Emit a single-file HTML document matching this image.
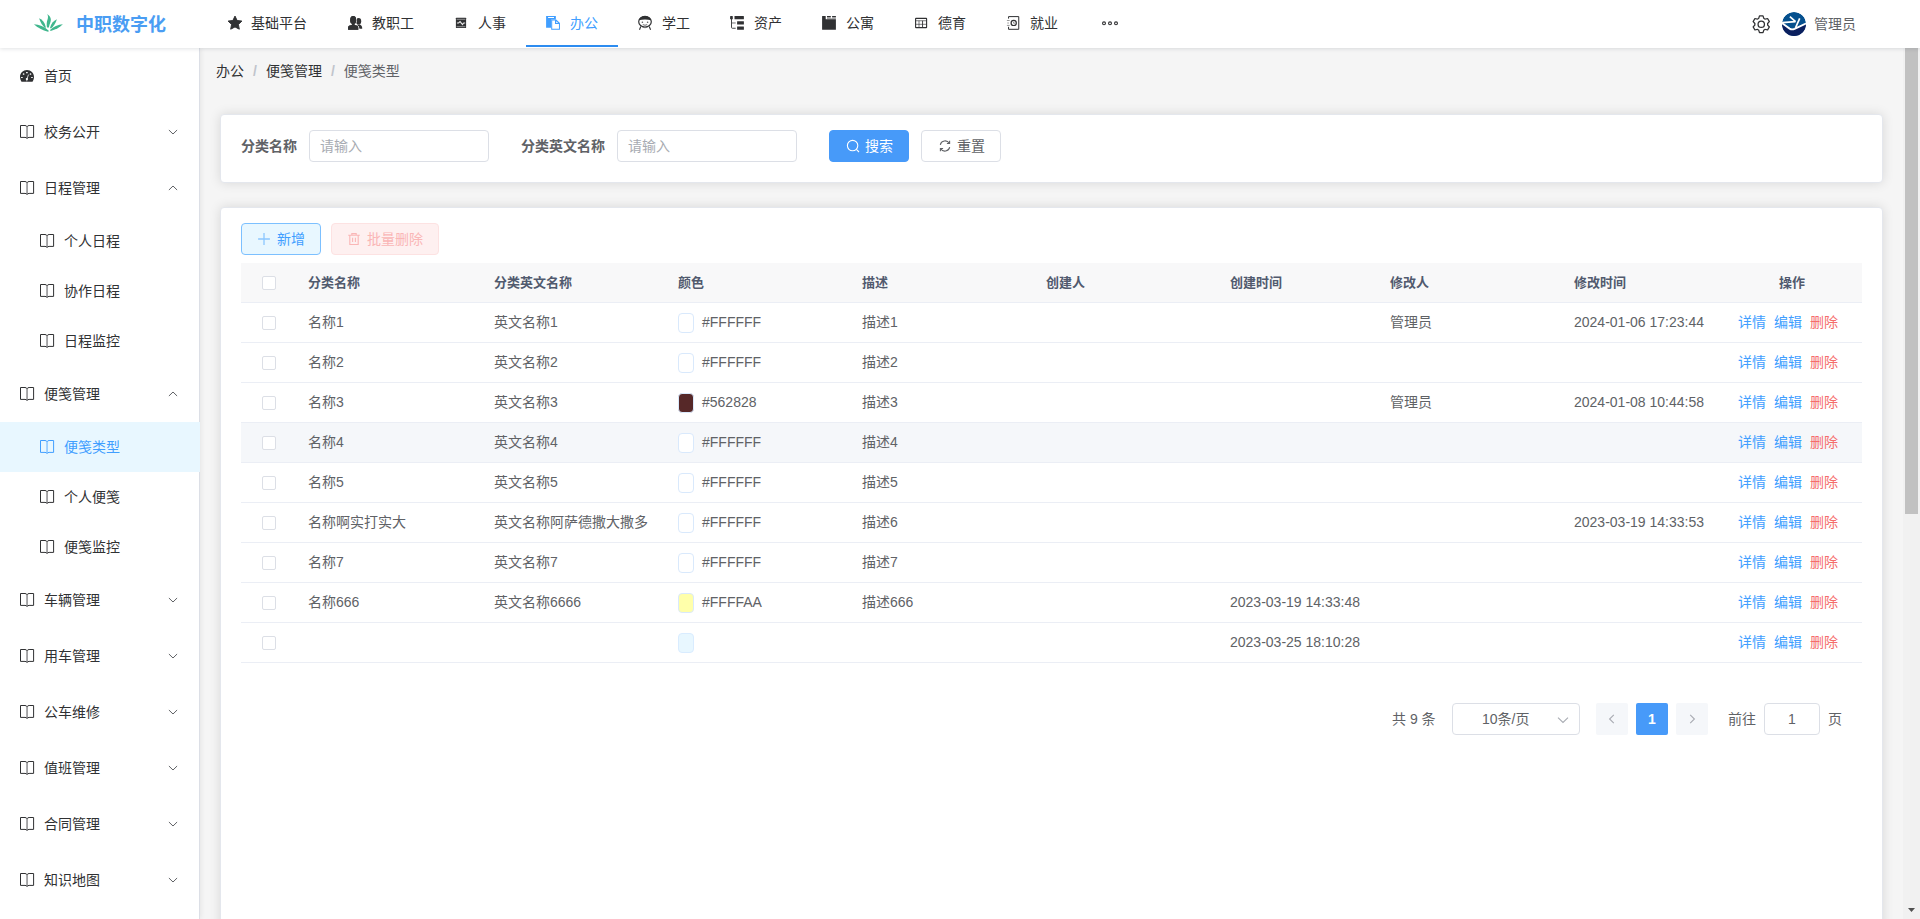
<!DOCTYPE html>
<html lang="zh-CN">
<head>
<meta charset="utf-8">
<title>便笺类型</title>
<style>
*{box-sizing:border-box;margin:0;padding:0}
html,body{width:1920px;height:919px;overflow:hidden}
body{font-family:"Liberation Sans","Noto Sans CJK SC",sans-serif;font-size:14px;color:#606266;background:#f5f5f5;position:relative}
svg{display:block}
/* header */
#hd{position:absolute;left:0;top:0;width:1920px;height:48px;background:#fff;box-shadow:0 1px 4px rgba(0,21,41,.12);z-index:10}
#logo{position:absolute;left:33px;top:13px}
#brand{position:absolute;left:76px;top:0;height:48px;line-height:50px;font-size:18px;font-weight:bold;color:#4a9df3;letter-spacing:0}
.nv{position:absolute;top:0;height:47px;line-height:46px;font-size:14px;color:#303133;white-space:nowrap}
.nv svg{position:absolute;left:20px;top:15px}
.nv span{position:absolute;left:44px;top:0}
.nv.on{color:#409eff;border-bottom:2px solid #2d8cf0}
#gear{position:absolute;left:1750.500px;top:13.600px}
#avatar{position:absolute;left:1782px;top:12px;width:24px;height:24px;border-radius:50%;overflow:hidden}
#uname{position:absolute;left:1814px;top:1px;line-height:47px;font-size:14px;color:#606266}
/* sidebar */
#sb{position:absolute;left:0;top:48px;width:200px;height:871px;background:#fff;border-right:1px solid #dcdfe6;box-shadow:1px 0 5px rgba(0,0,0,.07);z-index:5}
.mi{position:absolute;left:0;width:200px;height:56px;line-height:56px;color:#303133;font-size:14px}
.mi .ic{position:absolute;left:20px;top:21px}
.mi .tx{position:absolute;left:44px;top:0}
.mi .ar{position:absolute;left:167px;top:22px}
.si{position:absolute;left:0;width:200px;height:50px;line-height:50px;color:#303133;font-size:14px}
.si .ic{position:absolute;left:40px;top:18px}
.si .tx{position:absolute;left:64px;top:0}
.si.on{background:#e8f7ff;color:#409eff}
/* main */
#bc{position:absolute;left:216px;top:48px;height:46px;line-height:46px;font-size:14px;color:#303133;white-space:nowrap}
#bc i{font-style:normal;color:#c0c4cc;margin:0 9px;font-weight:bold}
#bc .last{color:#606266}
.card{position:absolute;background:#fff;border-radius:4px;border:1px solid #e4e7ed;box-shadow:0 0 12px rgba(0,0,0,.12)}
.lb{position:absolute;font-weight:bold;color:#606266;font-size:14px;line-height:32px;white-space:nowrap}
.ip{position:absolute;height:32px;border:1px solid #dcdfe6;border-radius:4px;background:#fff;line-height:30px;padding-left:10px;color:#a8abb2;font-size:14px}
.btn{position:absolute;height:32px;border-radius:4px;font-size:14px;line-height:30px;white-space:nowrap;border:1px solid #dcdfe6}
.btn svg{position:absolute;top:8px}
.btn span{position:absolute;top:0}
/* table */
#tb{position:absolute;left:241px;top:263px;width:1621px}
.tr{position:absolute;left:0;width:1621px;height:40px;border-bottom:1px solid #ebeef5;line-height:39px;font-size:14px;color:#606266}
.tr.h{background:#f8f8f9;color:#515a6e;font-weight:bold;font-size:13px}
.tr.hv{background:#f5f7fa}
.tr b,.tr s{position:absolute;top:0;font-weight:inherit;text-decoration:none;white-space:nowrap}
.ck{position:absolute;left:21px;top:13px;width:14px;height:14px;border:1px solid #dcdfe6;border-radius:2px;background:#fff}
.sw{position:absolute;left:437px;top:10px;width:16px;height:20px;border:1px solid #d9e9fc;border-radius:4px;background:#fff}
.op a{position:absolute;top:0;color:#409eff;font-size:14px}
.op a.d{color:#f56c6c}
/* pager */
#pg{position:absolute;left:0;top:0;font-size:13px;color:#606266}
#pg>*{position:absolute;white-space:nowrap}
/* scrollbar */
#sct{position:absolute;left:1903px;top:48px;width:17px;height:871px;background:#f1f1f1;z-index:6}
#sch{position:absolute;left:1905px;top:48px;width:13px;height:466px;background:#c1c1c1;z-index:7}
</style>
</head>
<body>
<div id="hd">
<svg id="logo" width="31" height="20" viewBox="0 0 31 20"><g fill="#40b68d"><path d="M14.1 1.200C16.800 2.400 18.600 5.400 17.600 8.600C16.900 10.900 16.200 12.600 15.900 14.600L14 14.500C13.400 11.500 13.800 8.400 14.600 6.200C15.200 4.400 15.200 2.600 14.100 1.200Z"/><path d="M6.100 5.300C9.400 6.600 11.800 9.600 12.900 14.400L11.900 14.900C9.600 12.800 7.400 9.600 6.100 5.300Z"/><path d="M23.900 6.300C20.400 7.800 18 10.800 17 15L18 15.400C20.600 13.400 22.800 10.400 23.900 6.300Z"/><path d="M0.900 11.300C6 11.400 11.400 13.600 16 18L15 18.800C9.600 17.200 4.600 14.800 0.900 11.300Z"/><path d="M29.900 11.300C25 11.600 20.400 13.600 17 17L17.600 17.900C22.400 16.800 26.600 14.600 29.900 11.300Z"/></g></svg>
<div id="brand">中职数字化</div>
<div class="nv" style="left:207px;width:121px"><svg width="16" height="16" viewBox="0 0 16 16"><path fill="#303133" d="M8 1.1l2.1 4.4 4.8.6-3.5 3.3.9 4.8L8 11.9l-4.3 2.3.9-4.8L1.1 6.1l4.8-.6z" stroke="#303133" stroke-width="1" stroke-linejoin="round"/></svg><span>基础平台</span></div>
<div class="nv" style="left:328px;width:106px"><svg width="16" height="16" viewBox="0 0 16 16"><g fill="#303133"><ellipse cx="10.600" cy="6.300" rx="2.600" ry="3.300"/><path d="M9.600 9.300c.7.300 1.500.3 2.200 0l1.100 1c.9.800 1.300 1.700 1.300 2.900v.6h-2.800c-.1-1.600-.7-2.700-2.200-3.400z"/><g stroke="#fff" stroke-width="1.500" paint-order="stroke"><ellipse cx="5.200" cy="5.200" rx="3" ry="4.100"/><path d="M3.900 8.400h2.600v1.500l2.100.7c1.100.4 1.700 1.100 1.700 2.300v1.900H.1v-1.900c0-1.200.6-1.900 1.700-2.300l2.100-.7z"/></g><path d="M3.900 8.400h2.600v1.500l2.100.7c1.100.4 1.700 1.100 1.700 2.300v1.900H.1v-1.900c0-1.200.6-1.900 1.700-2.300l2.100-.7z"/><ellipse cx="5.200" cy="5.200" rx="3" ry="4.100"/></g></svg><span>教职工</span></div>
<div class="nv" style="left:434px;width:92px"><svg width="16" height="16" viewBox="0 0 16 16"><rect x="1.900" y="2.800" width="10.200" height="10.200" rx=".5" fill="#303133"/><path d="M2.600 4.300h8.800M2.600 11.700h8.800" stroke="#fff" stroke-width=".8" opacity=".6" fill="none"/><path d="M2.900 8h1.700l1.500-1.400 2.400 3 1.200-1.600h1.500" fill="none" stroke="#fff" stroke-width="1.100" opacity=".9"/></svg><span>人事</span></div>
<div class="nv on" style="left:526px;width:92px"><svg width="16" height="16" viewBox="0 0 16 16"><path fill="#409eff" fill-rule="evenodd" d="M.1 1.100h9.750v3.500H5.200v8.200H.1zM2.100 2.100h5.900v1H2.100z"/><path fill="#409eff" fill-rule="evenodd" d="M5.200 4.600h5l3.750 3.500v6.700H5.200zM6.200 5.600v8.200h6.750V9H9V5.600zM10.200 6.200v1.800h1.900z"/></svg><span>办公</span></div>
<div class="nv" style="left:618px;width:92px"><svg width="16" height="16" viewBox="0 0 16 16"><ellipse cx="7" cy="6.700" rx="6.300" ry="5.300" fill="none" stroke="#303133" stroke-width="1.200"/><path fill="#303133" d="M.7 5.300C1.500 2.600 4 .9 7 .9s5.500 1.700 6.300 4.400C11.200 4.700 9.100 4.500 7 4.500S2.800 4.700.7 5.300z"/><circle cx="4.400" cy="7.300" r=".8" fill="#303133" opacity=".8"/><circle cx="9.600" cy="7.300" r=".8" fill="#303133" opacity=".8"/><path fill="none" stroke="#303133" stroke-width="1" opacity=".7" d="M4.800 9.600q2.200 1.300 4.400 0"/><path fill="none" stroke="#303133" stroke-width=".9" opacity=".55" d="M4.600 12.300q2.400.9 4.800 0"/><path fill="none" stroke="#303133" stroke-width="1.100" d="M2.800 11.500L1.500 14.800M11.200 11.500l1.400 3.300"/></svg><span>学工</span></div>
<div class="nv" style="left:710px;width:92px"><svg width="16" height="16" viewBox="0 0 16 16"><g fill="#303133"><rect x=".1" y=".9" width="2.700" height="3.400" rx=".6"/><rect x="4.500" y="1.100" width="9.400" height="3.200" rx=".3"/><rect x="7.100" y="6.200" width="6.800" height="3.400" rx=".3"/><rect x="7.100" y="11.400" width="6.800" height="3.400" rx=".3"/></g><path fill="none" stroke="#303133" stroke-width=".9" d="M1.500 4v8.400q0 .85.850.85H5.700"/><path fill="none" stroke="#303133" stroke-width="1.500" opacity=".45" d="M1.900 7.950h3.800"/></svg><span>资产</span></div>
<div class="nv" style="left:802px;width:92px"><svg width="16" height="16" viewBox="0 0 16 16"><path fill="#303133" d="M.1 1.200q0-.3.300-.3h3q.3 0 .3.300v3h10.200v10.300q0 .3-.3.300H.4q-.3 0-.3-.3z"/><path fill="#303133" d="M5 .9h3.800v1H5zM10.100.9h3.800v1h-3.800z"/><path fill="#303133" opacity=".45" d="M5 1.900h3.800v2.300H5zM10.100 1.900h3.800v2.300h-3.800zM8.800 3.300h1.300v.9H8.800z"/></svg><span>公寓</span></div>
<div class="nv" style="left:894px;width:92px"><svg width="16" height="16" viewBox="0 0 16 16"><rect x="1.600" y="3.400" width="11" height="9.200" rx=".4" fill="none" stroke="#303133" stroke-width="1.100"/><path fill="none" stroke="#303133" stroke-width=".9" opacity=".7" d="M1.600 5.750h11M1.600 9.300h11M5 5.750v6.850"/><path fill="none" stroke="#303133" stroke-width=".9" d="M8.550 5.750v6.850"/></svg><span>德育</span></div>
<div class="nv" style="left:986px;width:92px"><svg width="16" height="16" viewBox="0 0 16 16"><path fill="none" stroke="#303133" stroke-width="1" d="M2.550 3.600V1.600h10.200v12.700H2.550v-2.500"/><path fill="none" stroke="#303133" stroke-width=".9" opacity=".55" d="M.9 5.500h2.800M1.300 8h1.600M.9 10.400h2.800"/><circle cx="7.700" cy="7.900" r="2.600" fill="none" stroke="#303133" stroke-width="1.200"/><path fill="none" stroke="#303133" stroke-width=".9" opacity=".6" d="M7.600 6.700v1.500h1.300"/></svg><span>就业</span></div>
<div class="nv" style="left:1078px;width:60px"><svg style="left:22px" width="20" height="16" viewBox="0 0 20 16"><g fill="none" stroke="#303133" stroke-width="1.100"><circle cx="4" cy="8.300" r="1.450"/><circle cx="10" cy="8.300" r="1.450"/><circle cx="16" cy="8.300" r="1.450"/></g></svg></div>
<svg id="gear" width="20.500" height="20.500" viewBox="0 0 1024 1024"><path fill="#303133" d="M600.704 64a32 32 0 0 1 30.464 22.208l35.200 109.376c14.784 7.232 28.928 15.360 42.432 24.512l112.384-24.192a32 32 0 0 1 34.432 15.360L944.32 364.800a32 32 0 0 1-4.032 37.504l-77.120 85.120a357.120 357.120 0 0 1 0 49.024l77.120 85.248a32 32 0 0 1 4.032 37.504l-88.704 153.600a32 32 0 0 1-34.432 15.296L708.800 803.904c-13.440 9.088-27.648 17.280-42.368 24.512l-35.264 109.376A32 32 0 0 1 600.704 960H423.296a32 32 0 0 1-30.464-22.208L357.696 828.480a351.616 351.616 0 0 1-42.560-24.640l-112.320 24.256a32 32 0 0 1-34.432-15.360L79.680 659.200a32 32 0 0 1 4.032-37.504l77.120-85.248a357.120 357.120 0 0 1 0-48.896l-77.120-85.248A32 32 0 0 1 79.680 364.800l88.704-153.600a32 32 0 0 1 34.432-15.296l112.320 24.256c13.568-9.152 27.776-17.408 42.560-24.640l35.200-109.312A32 32 0 0 1 423.232 64H600.640zm-23.424 64H446.720l-36.352 113.088-24.512 11.968a294.113 294.113 0 0 0-34.816 20.096l-22.656 15.360-116.224-25.088-65.280 113.152 79.680 88.192-1.920 27.136a293.120 293.120 0 0 0 0 40.192l1.920 27.136-79.808 88.192 65.344 113.152 116.224-25.024 22.656 15.296a294.113 294.113 0 0 0 34.816 20.096l24.512 11.968L446.720 896h130.688l36.480-113.152 24.448-11.904a288.282 288.282 0 0 0 34.752-20.096l22.592-15.296 116.288 25.024 65.280-113.152-79.744-88.192 1.920-27.136a293.120 293.120 0 0 0 0-40.256l-1.920-27.136 79.808-88.128-65.344-113.152-116.288 24.960-22.592-15.232a287.616 287.616 0 0 0-34.752-20.096l-24.448-11.904L577.344 128zM512 320a192 192 0 1 1 0 384 192 192 0 0 1 0-384zm0 64a128 128 0 1 0 0 256 128 128 0 0 0 0-256z"/></svg>
<svg id="avatar" width="24" height="24" viewBox="0 0 24 24"><circle cx="12" cy="12" r="12" fill="#05508e"/><path d="M0 11.500L7.500 17Q9.800 18.400 12.800 17.200L24 12V24H0z" fill="#0a1f5e"/><g fill="none" stroke="#fff" stroke-width="1.700"><path d="M-.5 10.800L7.600 16.600Q9.800 18 12.600 16.900L24.500 11.300" stroke-width="1.900"/><path d="M.1 10.600L13.500 9.600"/><path d="M7.900 4.700L13.500 9.600"/><path d="M17.700 6.400L13.500 15.800"/></g></svg>
<div id="uname">管理员</div>
</div>

<div id="sb">
<div class="mi" style="top:0px"><svg class="ic" style="top:22px" width="15" height="12" viewBox="0 0 15 12"><path fill="#303133" d="M7 .1C3.100.1 0 3.200 0 7.100c0 1.500.5 2.900 1.200 4.100.2.300.5.600.9.600h9.800c.4 0 .7-.3.900-.6.700-1.200 1.200-2.600 1.200-4.100 0-3.900-3.100-7-7-7z"/><g fill="#fff"><rect x="6" y="1.900" width="1.800" height="1.300" rx=".5"/><rect x="1" y="6.900" width="1.800" height="1.200" rx=".5"/><rect x="11.050" y="6.900" width="1.800" height="1.200" rx=".5"/><circle cx="3.600" cy="4" r=".85"/><circle cx="10.500" cy="4" r=".85"/><circle cx="6.900" cy="9.050" r="1.150"/></g><path d="M6.900 9.050L8.500 4.600" stroke="#fff" stroke-width=".9" opacity=".85" fill="none"/><path d="M6.900 9.050L6.800 11.300" stroke="#fff" stroke-width=".9" opacity=".7" fill="none"/></svg><span class="tx">首页</span></div>
<div class="mi" style="top:56px"><svg class="ic" width="15" height="15" viewBox="0 0 15 15"><path fill="none" stroke="#303133" stroke-width="1" d="M.5.500h4.500c1.100 0 1.800.5 2.050 1.300C7.300 1 8 .5 9.100.5h4.500v11.900H9.100c-1.100 0-1.800.4-2.050 1.100-.25-.7-.95-1.100-2.050-1.100H.5z"/><path fill="none" stroke="#303133" stroke-width="1.400" opacity=".6" d="M7.050 1.900v11.400"/></svg><span class="tx">校务公开</span><svg class="ar" width="12" height="12" viewBox="0 0 12 12"><path fill="none" stroke="#606266" stroke-width="1" d="M1.900 4L6 8l4.100-4"/></svg></div>
<div class="mi" style="top:112px"><svg class="ic" width="15" height="15" viewBox="0 0 15 15"><path fill="none" stroke="#303133" stroke-width="1" d="M.5.500h4.500c1.100 0 1.800.5 2.050 1.300C7.300 1 8 .5 9.100.5h4.500v11.900H9.100c-1.100 0-1.800.4-2.050 1.100-.25-.7-.95-1.100-2.050-1.100H.5z"/><path fill="none" stroke="#303133" stroke-width="1.400" opacity=".6" d="M7.050 1.900v11.400"/></svg><span class="tx">日程管理</span><svg class="ar" width="12" height="12" viewBox="0 0 12 12"><path fill="none" stroke="#606266" stroke-width="1" d="M1.900 8L6 4l4.100 4"/></svg></div>
<div class="si" style="top:168px"><svg class="ic" width="15" height="15" viewBox="0 0 15 15"><path fill="none" stroke="#303133" stroke-width="1" d="M.5.500h4.500c1.100 0 1.800.5 2.050 1.300C7.300 1 8 .5 9.100.5h4.500v11.900H9.100c-1.100 0-1.800.4-2.050 1.100-.25-.7-.95-1.100-2.050-1.100H.5z"/><path fill="none" stroke="#303133" stroke-width="1.400" opacity=".6" d="M7.050 1.900v11.400"/></svg><span class="tx">个人日程</span></div>
<div class="si" style="top:218px"><svg class="ic" width="15" height="15" viewBox="0 0 15 15"><path fill="none" stroke="#303133" stroke-width="1" d="M.5.500h4.500c1.100 0 1.800.5 2.050 1.300C7.300 1 8 .5 9.100.5h4.500v11.900H9.100c-1.100 0-1.800.4-2.050 1.100-.25-.7-.95-1.100-2.050-1.100H.5z"/><path fill="none" stroke="#303133" stroke-width="1.400" opacity=".6" d="M7.050 1.900v11.400"/></svg><span class="tx">协作日程</span></div>
<div class="si" style="top:268px"><svg class="ic" width="15" height="15" viewBox="0 0 15 15"><path fill="none" stroke="#303133" stroke-width="1" d="M.5.500h4.500c1.100 0 1.800.5 2.050 1.300C7.300 1 8 .5 9.100.5h4.500v11.900H9.100c-1.100 0-1.800.4-2.050 1.100-.25-.7-.95-1.100-2.050-1.100H.5z"/><path fill="none" stroke="#303133" stroke-width="1.400" opacity=".6" d="M7.050 1.900v11.400"/></svg><span class="tx">日程监控</span></div>
<div class="mi" style="top:318px"><svg class="ic" width="15" height="15" viewBox="0 0 15 15"><path fill="none" stroke="#303133" stroke-width="1" d="M.5.500h4.500c1.100 0 1.800.5 2.050 1.300C7.300 1 8 .5 9.100.5h4.500v11.900H9.100c-1.100 0-1.800.4-2.050 1.100-.25-.7-.95-1.100-2.050-1.100H.5z"/><path fill="none" stroke="#303133" stroke-width="1.400" opacity=".6" d="M7.050 1.900v11.400"/></svg><span class="tx">便笺管理</span><svg class="ar" width="12" height="12" viewBox="0 0 12 12"><path fill="none" stroke="#606266" stroke-width="1" d="M1.900 8L6 4l4.100 4"/></svg></div>
<div class="si on" style="top:374px"><svg class="ic" width="15" height="15" viewBox="0 0 15 15"><path fill="none" stroke="#409eff" stroke-width="1" d="M.5.500h4.500c1.100 0 1.800.5 2.050 1.300C7.300 1 8 .5 9.100.5h4.500v11.900H9.100c-1.100 0-1.800.4-2.050 1.100-.25-.7-.95-1.100-2.050-1.100H.5z"/><path fill="none" stroke="#409eff" stroke-width="1.400" opacity=".6" d="M7.050 1.900v11.400"/></svg><span class="tx">便笺类型</span></div>
<div class="si" style="top:424px"><svg class="ic" width="15" height="15" viewBox="0 0 15 15"><path fill="none" stroke="#303133" stroke-width="1" d="M.5.500h4.500c1.100 0 1.800.5 2.050 1.300C7.300 1 8 .5 9.100.5h4.500v11.900H9.100c-1.100 0-1.800.4-2.050 1.100-.25-.7-.95-1.100-2.050-1.100H.5z"/><path fill="none" stroke="#303133" stroke-width="1.400" opacity=".6" d="M7.050 1.900v11.400"/></svg><span class="tx">个人便笺</span></div>
<div class="si" style="top:474px"><svg class="ic" width="15" height="15" viewBox="0 0 15 15"><path fill="none" stroke="#303133" stroke-width="1" d="M.5.500h4.500c1.100 0 1.800.5 2.050 1.300C7.300 1 8 .5 9.100.5h4.500v11.900H9.100c-1.100 0-1.800.4-2.050 1.100-.25-.7-.95-1.100-2.050-1.100H.5z"/><path fill="none" stroke="#303133" stroke-width="1.400" opacity=".6" d="M7.050 1.900v11.400"/></svg><span class="tx">便笺监控</span></div>
<div class="mi" style="top:524px"><svg class="ic" width="15" height="15" viewBox="0 0 15 15"><path fill="none" stroke="#303133" stroke-width="1" d="M.5.500h4.500c1.100 0 1.800.5 2.050 1.300C7.300 1 8 .5 9.100.5h4.500v11.900H9.100c-1.100 0-1.800.4-2.050 1.100-.25-.7-.95-1.100-2.050-1.100H.5z"/><path fill="none" stroke="#303133" stroke-width="1.400" opacity=".6" d="M7.050 1.900v11.400"/></svg><span class="tx">车辆管理</span><svg class="ar" width="12" height="12" viewBox="0 0 12 12"><path fill="none" stroke="#606266" stroke-width="1" d="M1.900 4L6 8l4.100-4"/></svg></div>
<div class="mi" style="top:580px"><svg class="ic" width="15" height="15" viewBox="0 0 15 15"><path fill="none" stroke="#303133" stroke-width="1" d="M.5.500h4.500c1.100 0 1.800.5 2.050 1.300C7.300 1 8 .5 9.100.5h4.500v11.900H9.100c-1.100 0-1.800.4-2.050 1.100-.25-.7-.95-1.100-2.050-1.100H.5z"/><path fill="none" stroke="#303133" stroke-width="1.400" opacity=".6" d="M7.050 1.900v11.400"/></svg><span class="tx">用车管理</span><svg class="ar" width="12" height="12" viewBox="0 0 12 12"><path fill="none" stroke="#606266" stroke-width="1" d="M1.900 4L6 8l4.100-4"/></svg></div>
<div class="mi" style="top:636px"><svg class="ic" width="15" height="15" viewBox="0 0 15 15"><path fill="none" stroke="#303133" stroke-width="1" d="M.5.500h4.500c1.100 0 1.800.5 2.050 1.300C7.300 1 8 .5 9.100.5h4.500v11.900H9.100c-1.100 0-1.800.4-2.050 1.100-.25-.7-.95-1.100-2.050-1.100H.5z"/><path fill="none" stroke="#303133" stroke-width="1.400" opacity=".6" d="M7.050 1.900v11.400"/></svg><span class="tx">公车维修</span><svg class="ar" width="12" height="12" viewBox="0 0 12 12"><path fill="none" stroke="#606266" stroke-width="1" d="M1.900 4L6 8l4.100-4"/></svg></div>
<div class="mi" style="top:692px"><svg class="ic" width="15" height="15" viewBox="0 0 15 15"><path fill="none" stroke="#303133" stroke-width="1" d="M.5.500h4.500c1.100 0 1.800.5 2.050 1.300C7.300 1 8 .5 9.100.5h4.500v11.900H9.100c-1.100 0-1.800.4-2.050 1.100-.25-.7-.95-1.100-2.050-1.100H.5z"/><path fill="none" stroke="#303133" stroke-width="1.400" opacity=".6" d="M7.050 1.900v11.400"/></svg><span class="tx">值班管理</span><svg class="ar" width="12" height="12" viewBox="0 0 12 12"><path fill="none" stroke="#606266" stroke-width="1" d="M1.900 4L6 8l4.100-4"/></svg></div>
<div class="mi" style="top:748px"><svg class="ic" width="15" height="15" viewBox="0 0 15 15"><path fill="none" stroke="#303133" stroke-width="1" d="M.5.500h4.500c1.100 0 1.800.5 2.050 1.300C7.300 1 8 .5 9.100.5h4.500v11.900H9.100c-1.100 0-1.800.4-2.050 1.100-.25-.7-.95-1.100-2.050-1.100H.5z"/><path fill="none" stroke="#303133" stroke-width="1.400" opacity=".6" d="M7.050 1.900v11.400"/></svg><span class="tx">合同管理</span><svg class="ar" width="12" height="12" viewBox="0 0 12 12"><path fill="none" stroke="#606266" stroke-width="1" d="M1.900 4L6 8l4.100-4"/></svg></div>
<div class="mi" style="top:804px"><svg class="ic" width="15" height="15" viewBox="0 0 15 15"><path fill="none" stroke="#303133" stroke-width="1" d="M.5.500h4.500c1.100 0 1.800.5 2.050 1.300C7.300 1 8 .5 9.100.5h4.500v11.900H9.100c-1.100 0-1.800.4-2.050 1.100-.25-.7-.95-1.100-2.050-1.100H.5z"/><path fill="none" stroke="#303133" stroke-width="1.400" opacity=".6" d="M7.050 1.900v11.400"/></svg><span class="tx">知识地图</span><svg class="ar" width="12" height="12" viewBox="0 0 12 12"><path fill="none" stroke="#606266" stroke-width="1" d="M1.900 4L6 8l4.100-4"/></svg></div>
</div>
<div id="bc">办公<i>/</i>便笺管理<i>/</i><span class="last">便笺类型</span></div>
<div class="card" style="left:220px;top:114px;width:1663px;height:69px"></div>
<div class="lb" style="left:241px;top:130px">分类名称</div>
<div class="ip" style="left:309px;top:130px;width:180px">请输入</div>
<div class="lb" style="left:521px;top:130px">分类英文名称</div>
<div class="ip" style="left:617px;top:130px;width:180px">请输入</div>
<div class="btn" style="left:829px;top:130px;width:80px;background:#479af9;border-color:#479af9;color:#fff"><svg style="left:16px" width="14" height="14" viewBox="0 0 14 14"><circle cx="6.600" cy="6.600" r="5.200" fill="none" stroke="#fff" stroke-width="1.100"/><path d="M10.400 10.400l2.600 2.600" stroke="#fff" stroke-width="1.100" fill="none"/></svg><span style="left:35px">搜索</span></div>
<div class="btn" style="left:921px;top:130px;width:80px;background:#fff;color:#606266"><svg style="left:16px" width="14" height="14" viewBox="0 0 14 14"><g fill="none" stroke="#606266" stroke-width="1.100"><path d="M2.300 5.800A4.900 4.900 0 0 1 11.300 4.300"/><path d="M11.700 8.200A4.900 4.900 0 0 1 2.700 9.700"/><path d="M11.600 1.800v2.700H8.900"/><path d="M2.400 12.200V9.500h2.700"/></g></svg><span style="left:35px">重置</span></div>
<div class="card" style="left:220px;top:207px;width:1663px;height:760px"></div>
<div class="btn" style="left:241px;top:223px;width:80px;background:#e8f7ff;border-color:#7cc0ff;color:#409eff"><svg style="left:15.200px" width="14" height="14" viewBox="0 0 14 14"><path d="M7 1.100v11.800M1.100 7h11.800" stroke="#409eff" stroke-width="1.300" opacity=".55" fill="none"/></svg><span style="left:35px">新增</span></div>
<div class="btn" style="left:331px;top:223px;width:108px;background:#fef0f0;border-color:#fde2e2;color:#fab6b6"><svg style="left:15px" width="14" height="14" viewBox="0 0 14 14"><g fill="none" stroke="#fab6b6" stroke-width="1.100"><path d="M1.200 3.300h11.600M4.800 3.300V1.600h4.400v1.700M2.800 3.300v9.200h8.400V3.300M5.600 5.800v4.200M8.400 5.800v4.200"/></g></svg><span style="left:35px">批量删除</span></div>
<div id="tb">
<div class="tr h" style="top:0"><div class="ck"></div><b style="left:67px">分类名称</b><b style="left:253px">分类英文名称</b><b style="left:437px">颜色</b><b style="left:621px">描述</b><b style="left:805px">创建人</b><b style="left:989px">创建时间</b><b style="left:1149px">修改人</b><b style="left:1333px">修改时间</b><b style="left:1538px">操作</b></div>
<div class="tr" style="top:40px"><div class="ck"></div><s style="left:67px">名称1</s><s style="left:253px">英文名称1</s><div class="sw"></div><s style="left:461px">#FFFFFF</s><s style="left:621px">描述1</s><s style="left:1149px">管理员</s><s style="left:1333px">2024-01-06 17:23:44</s><div class="op"><a style="left:1497px">详情</a><a style="left:1533px">编辑</a><a class="d" style="left:1569px">删除</a></div></div>
<div class="tr" style="top:80px"><div class="ck"></div><s style="left:67px">名称2</s><s style="left:253px">英文名称2</s><div class="sw"></div><s style="left:461px">#FFFFFF</s><s style="left:621px">描述2</s><div class="op"><a style="left:1497px">详情</a><a style="left:1533px">编辑</a><a class="d" style="left:1569px">删除</a></div></div>
<div class="tr" style="top:120px"><div class="ck"></div><s style="left:67px">名称3</s><s style="left:253px">英文名称3</s><div class="sw" style="background:#562828"></div><s style="left:461px">#562828</s><s style="left:621px">描述3</s><s style="left:1149px">管理员</s><s style="left:1333px">2024-01-08 10:44:58</s><div class="op"><a style="left:1497px">详情</a><a style="left:1533px">编辑</a><a class="d" style="left:1569px">删除</a></div></div>
<div class="tr hv" style="top:160px"><div class="ck"></div><s style="left:67px">名称4</s><s style="left:253px">英文名称4</s><div class="sw"></div><s style="left:461px">#FFFFFF</s><s style="left:621px">描述4</s><div class="op"><a style="left:1497px">详情</a><a style="left:1533px">编辑</a><a class="d" style="left:1569px">删除</a></div></div>
<div class="tr" style="top:200px"><div class="ck"></div><s style="left:67px">名称5</s><s style="left:253px">英文名称5</s><div class="sw"></div><s style="left:461px">#FFFFFF</s><s style="left:621px">描述5</s><div class="op"><a style="left:1497px">详情</a><a style="left:1533px">编辑</a><a class="d" style="left:1569px">删除</a></div></div>
<div class="tr" style="top:240px"><div class="ck"></div><s style="left:67px">名称啊实打实大</s><s style="left:253px">英文名称阿萨德撒大撒多</s><div class="sw"></div><s style="left:461px">#FFFFFF</s><s style="left:621px">描述6</s><s style="left:1333px">2023-03-19 14:33:53</s><div class="op"><a style="left:1497px">详情</a><a style="left:1533px">编辑</a><a class="d" style="left:1569px">删除</a></div></div>
<div class="tr" style="top:280px"><div class="ck"></div><s style="left:67px">名称7</s><s style="left:253px">英文名称7</s><div class="sw"></div><s style="left:461px">#FFFFFF</s><s style="left:621px">描述7</s><div class="op"><a style="left:1497px">详情</a><a style="left:1533px">编辑</a><a class="d" style="left:1569px">删除</a></div></div>
<div class="tr" style="top:320px"><div class="ck"></div><s style="left:67px">名称666</s><s style="left:253px">英文名称6666</s><div class="sw" style="background:#FFFFAA"></div><s style="left:461px">#FFFFAA</s><s style="left:621px">描述666</s><s style="left:989px">2023-03-19 14:33:48</s><div class="op"><a style="left:1497px">详情</a><a style="left:1533px">编辑</a><a class="d" style="left:1569px">删除</a></div></div>
<div class="tr" style="top:360px"><div class="ck"></div><div class="sw" style="background:#e8f7ff;border-color:#d9ecff"></div><s style="left:989px">2023-03-25 18:10:28</s><div class="op"><a style="left:1497px">详情</a><a style="left:1533px">编辑</a><a class="d" style="left:1569px">删除</a></div></div>
</div>
<div id="pg">
<div style="left:1392px;top:703px;line-height:32px;font-size:14px">共 9 条</div>
<div style="left:1452px;top:703px;width:128px;height:32px;border:1px solid #dcdfe6;border-radius:4px;background:#fff;line-height:30px;font-size:14px"><span style="position:absolute;left:29px;top:0">10条/页</span><svg width="12" height="12" viewBox="0 0 12 12" style="position:absolute;left:104px;top:10px"><path d="M1 3.600L6 8.400l5-4.800" fill="none" stroke="#a8abb2" stroke-width="1.100"/></svg></div>
<div style="left:1596px;top:703px;width:32px;height:32px;background:#f5f7fa;border-radius:2px"><svg width="12" height="12" viewBox="0 0 12 12" style="position:absolute;left:10px;top:10px"><path d="M7.800 1.800L3.600 6l4.200 4.200" fill="none" stroke="#a8abb2" stroke-width="1.100"/></svg></div>
<div style="left:1636px;top:703px;width:32px;height:32px;background:#479af9;border-radius:2px;color:#fff;font-weight:bold;text-align:center;line-height:32px;font-size:14px">1</div>
<div style="left:1676px;top:703px;width:32px;height:32px;background:#f5f7fa;border-radius:2px"><svg width="12" height="12" viewBox="0 0 12 12" style="position:absolute;left:10px;top:10px"><path d="M4.200 1.800L8.400 6l-4.200 4.200" fill="none" stroke="#a8abb2" stroke-width="1.100"/></svg></div>
<div style="left:1728px;top:703px;line-height:32px;font-size:14px">前往</div>
<div style="left:1764px;top:703px;width:56px;height:32px;border:1px solid #dcdfe6;border-radius:4px;background:#fff;line-height:30px;text-align:center;font-size:14px">1</div>
<div style="left:1828px;top:703px;line-height:32px;font-size:14px">页</div>
</div>
<div id="sct"></div><div id="sch"></div><svg style="position:absolute;left:1907px;top:907px;z-index:8" width="9" height="6" viewBox="0 0 9 6"><path d="M1 1h7L4.500 5z" fill="#505050"/></svg>
</body>
</html>
